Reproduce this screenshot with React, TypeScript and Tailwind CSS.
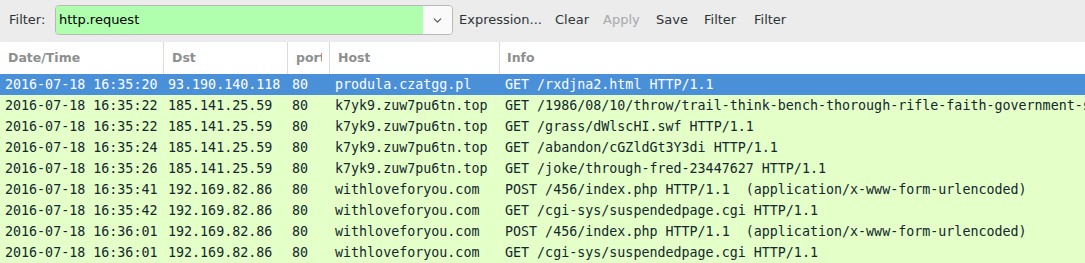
import { ChevronDown } from 'lucide-react'

interface Packet {
  time: string
  dst: string
  port: string
  host: string
  info: string
}

const packets: Packet[] = [
  { time: '2016-07-18 16:35:20', dst: '93.190.140.118', port: '80', host: 'produla.czatgg.pl', info: 'GET /rxdjna2.html HTTP/1.1' },
  { time: '2016-07-18 16:35:22', dst: '185.141.25.59', port: '80', host: 'k7yk9.zuw7pu6tn.top', info: 'GET /1986/08/10/throw/trail-think-bench-thorough-rifle-faith-government-spring-tomorrow.html HTTP/1.1' },
  { time: '2016-07-18 16:35:22', dst: '185.141.25.59', port: '80', host: 'k7yk9.zuw7pu6tn.top', info: 'GET /grass/dWlscHI.swf HTTP/1.1' },
  { time: '2016-07-18 16:35:24', dst: '185.141.25.59', port: '80', host: 'k7yk9.zuw7pu6tn.top', info: 'GET /abandon/cGZldGt3Y3di HTTP/1.1' },
  { time: '2016-07-18 16:35:26', dst: '185.141.25.59', port: '80', host: 'k7yk9.zuw7pu6tn.top', info: 'GET /joke/through-fred-23447627 HTTP/1.1' },
  { time: '2016-07-18 16:35:41', dst: '192.169.82.86', port: '80', host: 'withloveforyou.com', info: 'POST /456/index.php HTTP/1.1  (application/x-www-form-urlencoded)' },
  { time: '2016-07-18 16:35:42', dst: '192.169.82.86', port: '80', host: 'withloveforyou.com', info: 'GET /cgi-sys/suspendedpage.cgi HTTP/1.1' },
  { time: '2016-07-18 16:36:01', dst: '192.169.82.86', port: '80', host: 'withloveforyou.com', info: 'POST /456/index.php HTTP/1.1  (application/x-www-form-urlencoded)' },
  { time: '2016-07-18 16:36:01', dst: '192.169.82.86', port: '80', host: 'withloveforyou.com', info: 'GET /cgi-sys/suspendedpage.cgi HTTP/1.1' },
]

function HeaderCell({ label, className }: { label: string; className: string }) {
  return (
    <div className={`${className} h-full border-r border-[#dcdcdc] pl-[8px] pr-[7px] flex items-center overflow-hidden`}>
      <span className="whitespace-nowrap overflow-hidden">{label}</span>
    </div>
  )
}

export default function App() {
  return (
    <div className="w-[1085px] h-[263px] overflow-hidden bg-white font-['DejaVu_Sans',sans-serif] text-[13px]">
      {/* display filter toolbar */}
      <div className="h-[42px] bg-[#ececec] flex items-start pt-[5px] text-[#2e3436]">
        <div className="w-[55px] h-[30px] pl-[9px] flex items-center">Filter:</div>
        <div className="w-[398px] h-[30px] flex border border-[#b8b8b4] rounded-[4px] overflow-hidden">
          <div className="flex-1 bg-[#afffaf] pl-[3px] flex items-center text-black">http.request</div>
          <div className="w-[29px] bg-[#fafafa] flex items-center justify-center">
            <ChevronDown size={13} strokeWidth={2} className="text-[#555]" />
          </div>
        </div>
        <div className="h-[30px] flex items-center ml-[6px]">
          <span className="w-[96px]">Expression...</span>
          <span className="w-[48px]">Clear</span>
          <span className="w-[53px] text-[#a5a8a8]">Apply</span>
          <span className="w-[48px]">Save</span>
          <span className="w-[50px]">Filter</span>
          <span>Filter</span>
        </div>
      </div>

      {/* column header */}
      <div className="h-[32px] flex bg-white text-[#8d8f8f] font-bold text-[12.5px]">
        <HeaderCell label="Date/Time" className="w-[164px]" />
        <HeaderCell label="Dst" className="w-[124px]" />
        <HeaderCell label="port" className="w-[42px] pr-[2px]" />
        <HeaderCell label="Host" className="w-[170px]" />
        <div className="flex-1 pl-[7px] flex items-center">Info</div>
      </div>

      {/* packet list */}
      <div className="font-['DejaVu_Sans_Mono',monospace] text-[13.33px]">
        {packets.map((p, i) => (
          <div
            key={i}
            className={`h-[21px] leading-[21px] flex whitespace-pre ${
              i === 0 ? 'bg-[#4a90d9] text-white' : 'bg-[#e4ffc7] text-[#12272e]'
            }`}
          >
            <div className="w-[164px] pl-[5px] shrink-0">{p.time}</div>
            <div className="w-[124px] pl-[4px] shrink-0">{p.dst}</div>
            <div className="w-[42px] pl-[4px] shrink-0">{p.port}</div>
            <div className="w-[170px] pl-[5px] shrink-0">{p.host}</div>
            <div className="flex-1 pl-[5px] overflow-hidden">{p.info}</div>
          </div>
        ))}
      </div>
    </div>
  )
}
